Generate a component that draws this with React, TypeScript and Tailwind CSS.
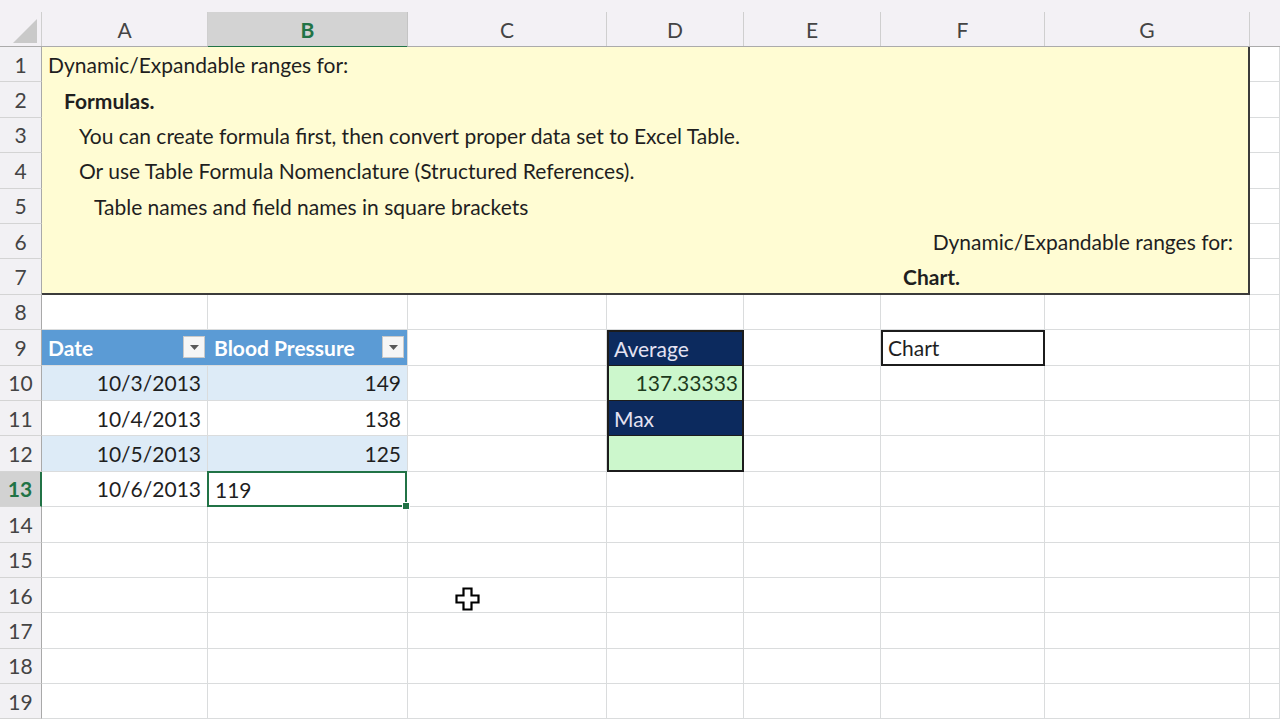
import React from 'react';

// column widths for A..G, H takes the rest
const colW = ['w-[166px]', 'w-[200px]', 'w-[199px]', 'w-[137px]', 'w-[137px]', 'w-[164px]', 'w-[205px]'];
const colNames = ['A', 'B', 'C', 'D', 'E', 'F', 'G'];

const grid = 'border-r border-b border-[#dadcdd]';

function RowHead({ n, active }: { n: number; active?: boolean }) {
    return (
        <div
            className={`w-[42px] shrink-0 h-[35.4px] flex items-center justify-center border-b border-b-[#d4d4d4] ${
                active
                    ? 'bg-[#d2d2d2] text-[#217346] font-bold border-r-2 border-r-[#217346]'
                    : 'bg-[#f2f1f4] text-[#444] border-r border-r-[#a9a9a9]'
            }`}
        >
            {n}
        </div>
    );
}

function FilterButton() {
    return (
        <span className="w-[22px] h-[22px] shrink-0 bg-[#f6f6f6] border border-[#c9c9c9] flex items-center justify-center">
            <svg width="9" height="5" viewBox="0 0 9 5">
                <path d="M0 0h9L4.5 5z" fill="#595959" />
            </svg>
        </span>
    );
}

function Empty({ w }: { w: string }) {
    return <div className={`${w} shrink-0 h-full ${grid}`} />;
}

function PlainRow({ n }: { n: number }) {
    return (
        <div className="flex h-[35.4px]">
            <RowHead n={n} />
            {colW.map((w) => (
                <Empty key={w} w={w} />
            ))}
            <div className={`flex-1 h-full ${grid}`} />
        </div>
    );
}

type DataRow = { n: number; date: string; bp: string; band: boolean };

const dataRows: DataRow[] = [
    { n: 10, date: '10/3/2013', bp: '149', band: true },
    { n: 11, date: '10/4/2013', bp: '138', band: false },
    { n: 12, date: '10/5/2013', bp: '125', band: true },
];

function DCell({ n }: { n: number }) {
    if (n === 10) {
        return (
            <div className="w-[137px] shrink-0 h-full bg-[#ccf7cc] border-x-2 border-b border-[#1c1c1c] flex items-center justify-end pr-[4px] text-[#1d3b1d]">
                137.33333
            </div>
        );
    }
    if (n === 11) {
        return (
            <div className="w-[137px] shrink-0 h-full bg-[#0c2a5e] border-x-2 border-b border-[#1c1c1c] flex items-center pl-[5px] text-[#e4e2f2]">
                Max
            </div>
        );
    }
    return (
        <div className="w-[137px] shrink-0 h-full bg-[#ccf7cc] border-x-2 border-b-2 border-[#1c1c1c]" />
    );
}

function Cursor() {
    return (
        <svg className="absolute left-[455px] top-[587px]" width="25" height="24" viewBox="0 0 25 24">
            <path
                d="M8.5 1.5h8v7h7v7h-7v7h-8v-7h-7v-7h7z"
                fill="#fff"
                stroke="#000"
                strokeWidth="2.2"
            />
        </svg>
    );
}

export default function App() {
    return (
        <div className="relative w-[1280px] h-[720px] overflow-hidden bg-white text-[21px] text-[#1f1f1f] font-['Lato',sans-serif] leading-none">
            {/* top strip */}
            <div className="h-[12px] bg-[#f3f1f5]" />

            {/* column headers */}
            <div className="flex h-[35px] bg-[#f3f1f5] border-b border-[#ababab] text-[#444]">
                <div className="w-[42px] shrink-0 h-full border-r border-[#cfcfcf] flex items-end justify-end pr-[4px] pb-[3px]">
                    <svg width="24" height="24" viewBox="0 0 24 24">
                        <path d="M24 0V24H0z" fill="#c9c9c9" />
                    </svg>
                </div>
                {colNames.map((c, i) =>
                    c === 'B' ? (
                        <div
                            key={c}
                            className={`${colW[i]} shrink-0 h-[36px] bg-[#d3d3d3] border-r border-[#c4c4c4] border-b-2 border-b-[#217346] flex items-center justify-center font-bold text-[#217346]`}
                        >
                            {c}
                        </div>
                    ) : (
                        <div
                            key={c}
                            className={`${colW[i]} shrink-0 h-full border-r border-[#cfcfcf] flex items-center justify-center`}
                        >
                            {c}
                        </div>
                    )
                )}
                <div className="flex-1" />
            </div>

            {/* rows 1-7: yellow note */}
            <div className="flex">
                <div className="flex flex-col">
                    {[1, 2, 3, 4, 5, 6, 7].map((n) => (
                        <RowHead key={n} n={n} />
                    ))}
                </div>
                <div className="w-[1208px] shrink-0 h-[247.8px] bg-[#fffcd3] border-r-2 border-b-2 border-[#3b3b3b] flex flex-col">
                    <div className="h-[35.4px] flex items-center pl-[6px]">Dynamic/Expandable ranges for:</div>
                    <div className="h-[35.4px] flex items-center pl-[22px] font-bold">Formulas.</div>
                    <div className="h-[35.4px] flex items-center pl-[37px]">
                        You can create formula first, then convert proper data set to Excel Table.
                    </div>
                    <div className="h-[35.4px] flex items-center pl-[37px]">
                        Or use Table Formula Nomenclature (Structured References).
                    </div>
                    <div className="h-[35.4px] flex items-center pl-[52px]">Table names and field names in square brackets</div>
                    <div className="h-[35.4px] flex items-center justify-end pr-[15px]">Dynamic/Expandable ranges for:</div>
                    <div className="h-[33.4px] flex items-center pl-[861px] font-bold">Chart.</div>
                </div>
                <div className="flex-1 flex flex-col">
                    {[1, 2, 3, 4, 5, 6, 7].map((n) => (
                        <div key={n} className={`h-[35.4px] ${grid}`} />
                    ))}
                </div>
            </div>

            <PlainRow n={8} />

            {/* row 9: table header */}
            <div className="flex h-[35.4px]">
                <RowHead n={9} />
                <div className="w-[166px] shrink-0 h-full bg-[#5b9bd5] border-b border-[#dadcdd] flex items-center justify-between pl-[6px] pr-[3px] font-bold text-white">
                    <span>Date</span>
                    <FilterButton />
                </div>
                <div className="w-[200px] shrink-0 h-full bg-[#5b9bd5] border-r border-b border-[#dadcdd] flex items-center justify-between pl-[6px] pr-[3px] font-bold text-white">
                    <span>Blood Pressure</span>
                    <FilterButton />
                </div>
                <Empty w="w-[199px]" />
                <div className="w-[137px] shrink-0 h-full bg-[#0c2a5e] border-2 border-b border-[#1c1c1c] flex items-center pl-[5px] text-[#e4e2f2]">
                    Average
                </div>
                <Empty w="w-[137px]" />
                <div className="w-[164px] shrink-0 h-full border-2 border-[#1c1c1c] flex items-center pl-[5px]">Chart</div>
                <Empty w="w-[205px]" />
                <div className={`flex-1 h-full ${grid}`} />
            </div>

            {/* rows 10-12: table data */}
            {dataRows.map((r) => (
                <div key={r.n} className="flex h-[35.4px]">
                    <RowHead n={r.n} />
                    <div
                        className={`w-[166px] shrink-0 h-full ${grid} ${r.band ? 'bg-[#ddebf7]' : ''} flex items-center justify-end pr-[6px]`}
                    >
                        {r.date}
                    </div>
                    <div
                        className={`w-[200px] shrink-0 h-full ${grid} ${r.band ? 'bg-[#ddebf7]' : ''} flex items-center justify-end pr-[6px]`}
                    >
                        {r.bp}
                    </div>
                    <Empty w="w-[199px]" />
                    <DCell n={r.n} />
                    <Empty w="w-[137px]" />
                    <Empty w="w-[164px]" />
                    <Empty w="w-[205px]" />
                    <div className={`flex-1 h-full ${grid}`} />
                </div>
            ))}

            {/* row 13: active cell B13 */}
            <div className="flex h-[35.4px]">
                <RowHead n={13} active />
                <div className={`w-[166px] shrink-0 h-full ${grid} flex items-center justify-end pr-[6px]`}>10/6/2013</div>
                <div className="relative w-[200px] shrink-0 h-[36.4px] -ml-[1px] -mt-[1px] border-2 border-[#217346] flex items-center pl-[6px] pt-[1px]">
                    119
                    <span className="absolute -right-[5px] -bottom-[5px] w-[8px] h-[8px] bg-[#217346] border border-white" />
                </div>
                <div className={`w-[200px] shrink-0 h-full ${grid}`} />
                <Empty w="w-[137px]" />
                <Empty w="w-[137px]" />
                <Empty w="w-[164px]" />
                <Empty w="w-[205px]" />
                <div className={`flex-1 h-full ${grid}`} />
            </div>

            {[14, 15, 16, 17, 18, 19].map((n) => (
                <PlainRow key={n} n={n} />
            ))}

            <Cursor />
        </div>
    );
}
